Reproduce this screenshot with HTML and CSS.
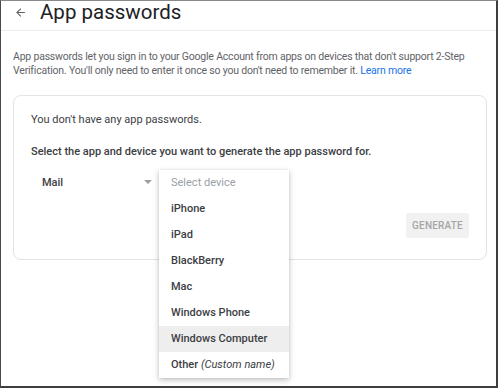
FILE: index.html
```html
<!DOCTYPE html>
<html lang="en">
<head>
    <meta charset="UTF-8">
    <title>App passwords</title>
    <link rel="stylesheet" href="styles.css">
</head>
<body>
    <div class="frame">
        <div class="header">
            <span class="back">
                <svg width="13" height="13" viewBox="0 0 24 24"><path d="M20 11H7.83l5.59-5.59L12 4l-8 8 8 8 1.41-1.41L7.83 13H20v-2z" fill="#5f6368"/></svg>
            </span>
            <h1>App passwords</h1>
        </div>

        <p class="intro">App passwords let you sign in to your Google Account from apps on devices that don't support 2&#8209;Step Verification. You'll only need to enter it once so you don't need to remember it. <a href="#">Learn more</a></p>

        <div class="card">
            <p class="empty">You don't have any app passwords.</p>
            <p class="prompt">Select the app and device you want to generate the app password for.</p>

            <div class="pickers">
                <div class="select">
                    <span>Mail</span>
                    <span class="caret"></span>
                </div>
                <div class="menu-slot">
                    <ul class="menu">
                        <li class="placeholder">Select device</li>
                        <li>iPhone</li>
                        <li>iPad</li>
                        <li>BlackBerry</li>
                        <li>Mac</li>
                        <li>Windows Phone</li>
                        <li class="active">Windows Computer</li>
                        <li>Other <em>(Custom name)</em></li>
                    </ul>
                </div>
            </div>

            <div class="actions">
                <button class="generate" disabled>Generate</button>
            </div>
        </div>
    </div>
</body>
</html>
```

FILE: styles.css
```css
html, body {
    margin: 0;
    padding: 0;
    background: #fff;
}
body {
    font-family: Roboto, 'Liberation Sans', sans-serif;
    color: #5f6368;
}
.frame {
    width: 495px;
    height: 385px;
    border-left: 1px solid #4a4a4a;
    border-top: 1px solid #8a8a8a;
    border-right: 2px solid #3e3e3e;
    border-bottom: 2px solid #3e3e3e;
    overflow: hidden;
}
.header {
    display: flex;
    align-items: center;
    height: 29px;
    border-bottom: 1px solid #ececec;
    padding-left: 13px;
}
.back {
    display: flex;
    width: 13px;
    margin-top: -7px;
}
.header h1 {
    margin: -8px 0 0 13px;
    font-size: 20.5px;
    line-height: 22px;
    font-weight: 400;
    color: #202124;
}
.intro {
    margin: 19px 8px 0 12px;
    font-size: 10.5px;
    letter-spacing: -0.2px;
    line-height: 14px;
    color: #5f6368;
}
.intro a {
    color: #1a73e8;
    text-decoration: none;
}
.card {
    margin: 17px 9px 0 12px;
    height: 163px;
    border: 1px solid #e3e3e3;
    border-radius: 8px;
    padding: 0 17px;
}
.empty {
    margin: 17px 0 0 0;
    font-size: 11px;
    line-height: 14px;
    color: #3c4043;
}
.prompt {
    margin: 18px 0 0 0;
    font-size: 11px;
    line-height: 14px;
    font-weight: 500;
    color: #3c4043;
}
.pickers {
    display: flex;
    margin-top: 10px;
    height: 26px;
}
.select {
    width: 110px;
    display: flex;
    align-items: center;
    justify-content: space-between;
    padding: 0 7px 0 11px;
    font-size: 11px;
    font-weight: 500;
    color: #3c4043;
}
.caret {
    width: 0;
    height: 0;
    border-left: 4px solid transparent;
    border-right: 4px solid transparent;
    border-top: 4px solid #9e9e9e;
}
.menu-slot {
    position: relative;
    width: 130px;
}
.menu {
    position: absolute;
    top: 1px;
    left: 0;
    width: 130px;
    margin: 0;
    padding: 0;
    list-style: none;
    background: #fff;
    box-shadow: 0 2px 6px rgba(0,0,0,0.25), 0 0 2px rgba(0,0,0,0.08);
    z-index: 2;
}
.menu li {
    height: 26px;
    line-height: 26px;
    padding-left: 12px;
    font-size: 11px;
    font-weight: 500;
    color: #3c4043;
}
.menu li.placeholder {
    color: #9aa0a6;
    font-weight: 400;
}
.menu li.active {
    background: #eeeeee;
}
.menu em {
    font-weight: 400;
}
.actions {
    display: flex;
    justify-content: flex-end;
    margin-top: 18px;
}
.generate {
    width: 63px;
    height: 25px;
    border: none;
    border-radius: 3px;
    background: #f1f1f1;
    color: #a5a5a5;
    font-family: inherit;
    font-size: 10px;
    font-weight: 500;
    text-transform: uppercase;
    letter-spacing: 0.2px;
    padding: 0;
}
```
